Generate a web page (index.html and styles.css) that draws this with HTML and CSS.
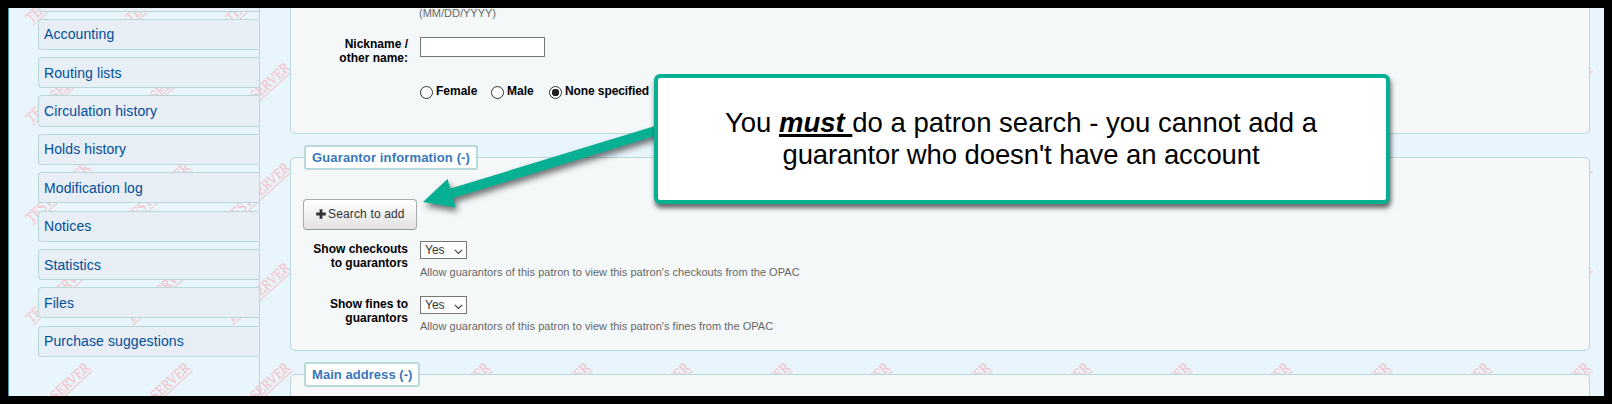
FILE: index.html
```html
<!DOCTYPE html>
<html lang="en">
<head>
<meta charset="utf-8">
<title>Patron entry</title>
<link rel="stylesheet" href="styles.css">
</head>
<body>
<div class="page">
  <svg class="watermark" width="1596" height="388" viewBox="8 8 1596 388" aria-hidden="true">
    <defs>
      <pattern id="mark" x="0" y="-50" width="100" height="100" patternUnits="userSpaceOnUse">
        <g transform="translate(32.5 75) rotate(-42.5)">
          <text class="mark-text" x="0" y="-2" textLength="81" lengthAdjust="spacingAndGlyphs">TEST SERVER</text>
          <path class="mark-line" d="M0 0.500H81"/>
        </g>
      </pattern>
    </defs>
    <rect x="8" y="8" width="1596" height="388" fill="url(#mark)"/>
  </svg>
  <nav class="sidebar">
    <span class="tab"></span>
    <a class="tab">Accounting</a>
    <a class="tab low">Routing lists</a>
    <a class="tab tall">Circulation history</a>
    <a class="tab">Holds history</a>
    <a class="tab low spaced">Modification log</a>
    <a class="tab">Notices</a>
    <a class="tab low">Statistics</a>
    <a class="tab low spaced">Files</a>
    <a class="tab">Purchase suggestions</a>
  </nav>
  <main class="content">
    <section class="panel identity">
      <p class="hint date">(MM/DD/YYYY)</p>
      <div class="row nickname">
        <label class="label">Nickname /<br>other name:</label>
        <input class="textbox" type="text">
      </div>
      <div class="radios">
        <label class="radio female"><span class="dot"></span>Female</label>
        <label class="radio male"><span class="dot"></span>Male</label>
        <label class="radio none"><span class="dot checked"></span>None specified</label>
      </div>
    </section>
    <section class="panel guarantor">
      <h2 class="legend wide">Guarantor information (-)</h2>
      <button class="search"><svg width="10" height="10" viewBox="0 0 10 10"><path d="M3.600 0.200h2.800v3.400h3.400v2.800h-3.400v3.400h-2.800v-3.400h-3.400v-2.800h3.400z"/></svg><span>Search to add</span></button>
      <div class="row checkouts">
        <span class="label">Show checkouts<br>to guarantors</span>
        <div>
          <div class="select">Yes<svg width="9" height="6" viewBox="0 0 9 6"><path d="M0.800 0.800L4.500 4.500L8.200 0.800"/></svg></div>
          <p class="hint">Allow guarantors of this patron to view this patron's checkouts from the OPAC</p>
        </div>
      </div>
      <div class="row fines">
        <span class="label">Show fines to<br>guarantors</span>
        <div>
          <div class="select">Yes<svg width="9" height="6" viewBox="0 0 9 6"><path d="M0.800 0.800L4.500 4.500L8.200 0.800"/></svg></div>
          <p class="hint">Allow guarantors of this patron to view this patron's fines from the OPAC</p>
        </div>
      </div>
    </section>
    <section class="panel address">
      <h2 class="legend">Main address (-)</h2>
    </section>
  </main>
</div>
<svg class="arrow" width="240" height="110" viewBox="420 110 240 110" aria-hidden="true">
  <path d="M423 202L447.500 179L450.500 188.500L660 124.500V134.500L453.500 198L455.500 207.500Z"/>
</svg>
<aside class="callout">
  <p>You <em>must </em>do a patron search - you cannot add a<br><span class="second">guarantor who doesn't have an account</span></p>
</aside>
</body>
</html>
```
FILE: styles.css
```css
* { box-sizing: border-box; }
body {
  margin: 0;
  width: 1612px;
  height: 404px;
  overflow: hidden;
  background: #000;
  font-family: "Liberation Sans", Arial, sans-serif;
  font-size: 12px;
  color: #000;
}
p, h2 { margin: 0; }
.page {
  position: relative;
  display: flex;
  width: 1596px;
  height: 388px;
  margin: 8px;
  overflow: hidden;
  background: #e9f5fc;
  border-left: 1px solid #4f93aa;
}
.watermark { position: absolute; left: -1px; top: 0; }
.mark-text { font: 15px "Liberation Serif", serif; fill: #f2c6cc; stroke: #f2c6cc; stroke-width: 0.300; }
.mark-line { stroke: #efcbd1; stroke-width: 1.300; }
.sidebar {
  position: relative;
  flex: none;
  width: 251px;
  padding-left: 29px;
  border-right: 1px solid #b9d8d9;
}
.tab {
  display: flex;
  align-items: center;
  height: 31px;
  margin-bottom: 7px;
  padding: 0 0 1px 5px;
  border: 1px solid #b9d8d9;
  border-right: 0;
  border-radius: 4px 0 0 4px;
  background: #e8eef5;
  color: #004d99;
  font-size: 14px;
  letter-spacing: 0.100px;
}
.sidebar .tab:first-child { margin-top: -27px; }
.tab.low { padding-bottom: 0; }
.tab.tall { height: 32px; }
.tab.spaced { margin-bottom: 8px; }
.content { position: relative; flex: 1; padding: 0 13px 0 30px; }
.panel {
  width: 1300px;
  border: 1px solid #b9d8d9;
  border-radius: 5px;
  background: #f4f8f9;
}
.identity { height: 126px; border-top: 0; border-radius: 0 0 5px 5px; }
.hint { color: #666; font-size: 11px; line-height: 13px; letter-spacing: 0.030px; }
.hint.date { height: 12px; padding-left: 128px; line-height: 11px; letter-spacing: 0; }
.row { display: flex; gap: 12px; }
.label { width: 117px; text-align: right; font-weight: bold; line-height: 14px; }
.nickname { margin-top: 17px; }
.textbox { width: 125px; height: 20px; border: 1px solid #767676; background: #fff; padding: 0; }
.radios { display: flex; padding: 19px 0 0 129px; }
.radio { display: flex; gap: 3px; font-weight: bold; line-height: 14px; }
.radio.female { width: 71px; }
.radio.male { width: 58px; }
.radio.none { letter-spacing: -0.100px; }
.dot { width: 13px; height: 13px; margin-top: 2px; border: 1px solid #333; border-radius: 50%; background: #fff; }
.dot.checked { background: radial-gradient(circle, #222 0 3.500px, #fff 4px); }
.guarantor { height: 194px; margin-top: 23px; }
.legend {
  width: max-content;
  height: 25px;
  margin: -13px 0 0 13px;
  padding: 0 6px;
  border: 2px solid #b9d8d9;
  border-radius: 3px;
  background: #fff;
  color: #3877ba;
  font-size: 13px;
  line-height: 21px;
  letter-spacing: 0.050px;
}
.legend.wide { letter-spacing: 0.140px; }
.search {
  display: flex;
  align-items: center;
  gap: 2px;
  width: 114px;
  height: 31px;
  margin: 29px 0 0 12px;
  padding: 0 0 1px 12px;
  border: 1px solid #aaa;
  border-bottom-color: #999;
  border-radius: 4px;
  background: linear-gradient(#fff, #e2e2e2);
  color: #333;
  font: 12px "Liberation Sans", Arial, sans-serif;
  white-space: nowrap;
}
.search path { fill: #333; }
.search span { letter-spacing: 0.150px; }
.checkouts { margin-top: 11px; }
.fines { margin-top: 17px; }
.checkouts .label, .fines .label { padding-top: 1px; }
.select {
  display: flex;
  align-items: center;
  gap: 9px;
  width: 47px;
  height: 18px;
  padding-left: 4px;
  border: 1px solid #767676;
  background: #fff;
  color: #333;
}
.select svg { margin-top: 4px; }
.select path { fill: none; stroke: #444; stroke-width: 1.200; }
.select + .hint { margin-top: 7px; }
.fines .select + .hint { margin-top: 6px; }
.address { height: 50px; margin-top: 23px; }
.arrow {
  position: absolute;
  left: 420px;
  top: 110px;
  filter: drop-shadow(2px 4px 3px rgba(0, 0, 0, 0.550));
}
.arrow path { fill: #08b093; }
.callout {
  position: absolute;
  left: 654px;
  top: 74px;
  width: 736px;
  height: 130px;
  padding: 29px 2px 0 0;
  border: 4px solid #08b093;
  border-radius: 6px;
  background: #fff;
  box-shadow: 1px 4px 5px rgba(0, 0, 0, 0.600);
  font-size: 27.500px;
  line-height: 32px;
  text-align: center;
}
.callout em { font-weight: bold; text-decoration: underline; text-decoration-thickness: 3px; }
.second { letter-spacing: -0.100px; }
```
